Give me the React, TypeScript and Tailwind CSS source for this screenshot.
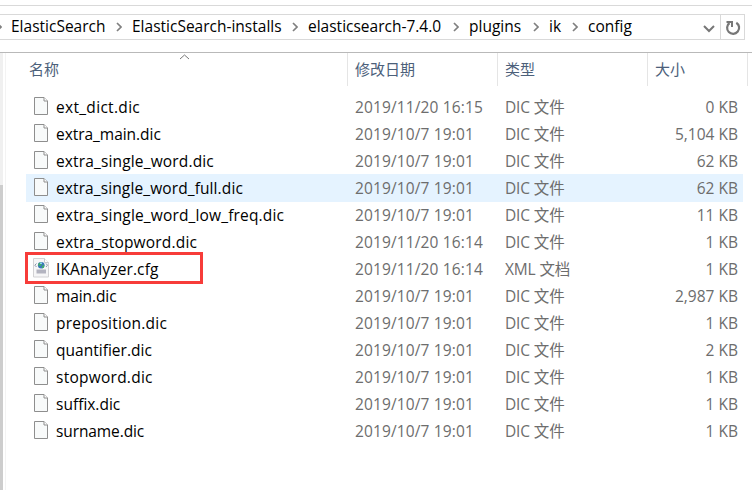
type Entry = { name: string; date: string; kind: string; size: string; tracking: string };

const recent = '2019/11/20 16:14';
const old = '2019/10/7 19:01';

const files: Entry[] = [
  { name: 'ext_dict.dic', date: '2019/11/20 16:15', kind: 'DIC', size: '0 KB', tracking: 'tracking-[0.31px]' },
  { name: 'extra_main.dic', date: old, kind: 'DIC', size: '5,104 KB', tracking: 'tracking-[-0.04px]' },
  { name: 'extra_single_word.dic', date: old, kind: 'DIC', size: '62 KB', tracking: 'tracking-[0.15px]' },
  { name: 'extra_single_word_full.dic', date: old, kind: 'DIC', size: '62 KB', tracking: 'tracking-[0.11px]' },
  { name: 'extra_single_word_low_freq.dic', date: old, kind: 'DIC', size: '11 KB', tracking: 'tracking-[0.16px]' },
  { name: 'extra_stopword.dic', date: recent, kind: 'DIC', size: '1 KB', tracking: 'tracking-[0.18px]' },
  { name: 'IKAnalyzer.cfg', date: recent, kind: 'XML', size: '1 KB', tracking: 'tracking-[0.12px]' },
  { name: 'main.dic', date: old, kind: 'DIC', size: '2,987 KB', tracking: 'tracking-[-0.1px]' },
  { name: 'preposition.dic', date: old, kind: 'DIC', size: '1 KB', tracking: 'tracking-[0.22px]' },
  { name: 'quantifier.dic', date: old, kind: 'DIC', size: '2 KB', tracking: 'tracking-[0.02px]' },
  { name: 'stopword.dic', date: old, kind: 'DIC', size: '1 KB', tracking: 'tracking-[0.25px]' },
  { name: 'suffix.dic', date: old, kind: 'DIC', size: '1 KB', tracking: 'tracking-[0px]' },
  { name: 'surname.dic', date: old, kind: 'DIC', size: '1 KB', tracking: 'tracking-[-0.1px]' },
];

const crumbs = [
  { label: 'ElasticSearch', width: 'w-[121px]' },
  { label: 'ElasticSearch-installs', width: 'w-[176px]' },
  { label: 'elasticsearch-7.4.0', width: 'w-[161px]' },
  { label: 'plugins', width: 'w-[80px]' },
  { label: 'ik', width: 'w-[39px]' },
  { label: 'config', width: 'w-[60px]' },
];

function PageIcon() {
  return (
    <svg width="16" height="20" viewBox="0 0 16 20" className="block">
      <path d="M1.5 1.5h9.500l3.500 3.500v13.500H1.500z" fill="#f8fafa" stroke="#8e8e8e" />
      <path d="M11 1.500V5h3.500" fill="#fff" stroke="#8e8e8e" />
    </svg>
  );
}

function XmlIcon() {
  return (
    <svg width="16" height="20" viewBox="0 0 16 20" className="block">
      <path d="M.5.500h11l4 4v14.500H.5z" fill="#f6f6f7" stroke="#d2d2d4" />
      <path d="M11.500.500v4h4" fill="#fff" stroke="#c8c8ca" />
      <path d="M3.500 5.500 1.800 7.200l1.700 1.800M13 5.500l1.500 1.700L13 9" fill="none" stroke="#8b98ad" />
      <circle cx="8.200" cy="7.200" r="3.300" fill="#3b78ba" />
      <path d="M5.500 5.500 8 4l1 2-1.500 2L5 7.500zM9 8l2.500-1.500-.5 3-2 1z" fill="#3fab6b" />
      <path d="M7 4.500h2v1.500H7z" fill="#8fd4f2" />
      <path d="M3.500 12.500h9.500M3.500 14.500h9.500" stroke="#b3b4c0" strokeWidth="2" />
    </svg>
  );
}

function AddressBar() {
  return (
    <div className="mt-[8px] flex h-[26px] w-[745px] border border-l-0 border-[#d9d9d9]">
      <div className="flex flex-1 pl-[11px] text-[15.500px] text-black">
        {crumbs.map((c, i) => (
          <div key={c.label} className={`${c.width} relative h-[24px] shrink-0 whitespace-nowrap leading-[22px]`}>
            <svg width="6" height="10" viewBox="0 0 6 10" className={i === 0 ? 'absolute top-[7px] left-[-15px]' : 'absolute top-[7px] left-[-16px]'}>
              <path d="M1 1l4 4-4 4" fill="none" stroke="#808080" strokeWidth="1.700" />
            </svg>
            {c.label}
          </div>
        ))}
      </div>
      <div className="flex w-[17px] items-center pt-[3px]">
        <svg width="12" height="8" viewBox="0 0 12 8"><path d="M1 1l5 5 5-5" fill="none" stroke="#777" strokeWidth="2" /></svg>
      </div>
      <div className="flex w-[24px] items-center justify-center border-l border-[#d9d9d9] pt-[1px]">
        <svg width="16" height="16" viewBox="0 0 16 16" fill="none" stroke="#777" strokeWidth="2.200">
          <path d="M11.300 2.700A6 6 0 1 1 4.500 3" />
          <path d="M1.500 2h5.500v5" strokeWidth="2" />
        </svg>
      </div>
    </div>
  );
}

function Header() {
  return (
    <div className="flex h-[33px] text-[15px] leading-[33px] text-[#4c607a]">
      <div className="relative w-[342px] border-r border-[#e5e5e5] pl-[23px]">
        名称
        <svg width="11" height="6" viewBox="0 0 11 6" className="absolute top-[1px] left-[173px]"><path d="M1 5l4.500-4L10 5" fill="none" stroke="#777" /></svg>
      </div>
      <div className="w-[150px] border-r border-[#e5e5e5] pl-[7px]">修改日期</div>
      <div className="w-[150px] border-r border-[#e5e5e5] pl-[7px]">类型</div>
      <div className="w-[100px] border-r border-[#e5e5e5] pl-[7px]">大小</div>
    </div>
  );
}

function Row({ file, selected, boxed }: { file: Entry; selected: boolean; boxed: boolean }) {
  return (
    <div className={`relative flex w-[717px] text-[15.500px] leading-[27px] whitespace-nowrap text-[#6d6d6d] ${selected ? '-mt-px h-[28px] bg-[#e5f3ff] pt-px' : 'h-[27px]'}`}>
      <div className="flex w-[329px] text-black">
        <div className="w-[30px] pt-[2px] pl-[7px]">{boxed ? <XmlIcon /> : <PageIcon />}</div>
        <span className={file.tracking}>{file.name}</span>
      </div>
      <div className="w-[150px] tracking-[0.13px]">{file.date}</div>
      <div className="w-[100px] tracking-[-0.15px]">{file.kind} {boxed ? '文档' : '文件'}</div>
      <div className="flex-1 pr-[5px] text-right">{file.size}</div>
      {boxed && <div className="absolute top-[-4px] left-[-1px] h-[32px] w-[178px] border-[3px] border-[#f73c39]" />}
    </div>
  );
}

export default function App() {
  return (
    <div className="flex h-[490px] w-[752px] flex-col overflow-hidden bg-white font-['Open_Sans','Noto_Sans_CJK_SC',sans-serif]">
      <div className="h-[6px] shrink-0 border-b border-[#d9d9d9]" />
      <AddressBar />
      <div className="h-[13px] shrink-0 border-b border-[#b9b9b9]" />
      <div className="flex flex-1">
        <div className="w-[3px] bg-[#f0f0f0] pt-[132px]"><div className="h-[305px] bg-[#cdcdcd]" /></div>
        <div className="ml-[2px] w-px bg-[#f3f3f3]" />
        <div className="flex-1">
          <Header />
          <div className="pt-[8px] pl-[20px]">
            {files.map((f) => (
              <Row key={f.name} file={f} selected={f.name === 'extra_single_word_full.dic'} boxed={f.kind === 'XML'} />
            ))}
          </div>
        </div>
      </div>
    </div>
  );
}
